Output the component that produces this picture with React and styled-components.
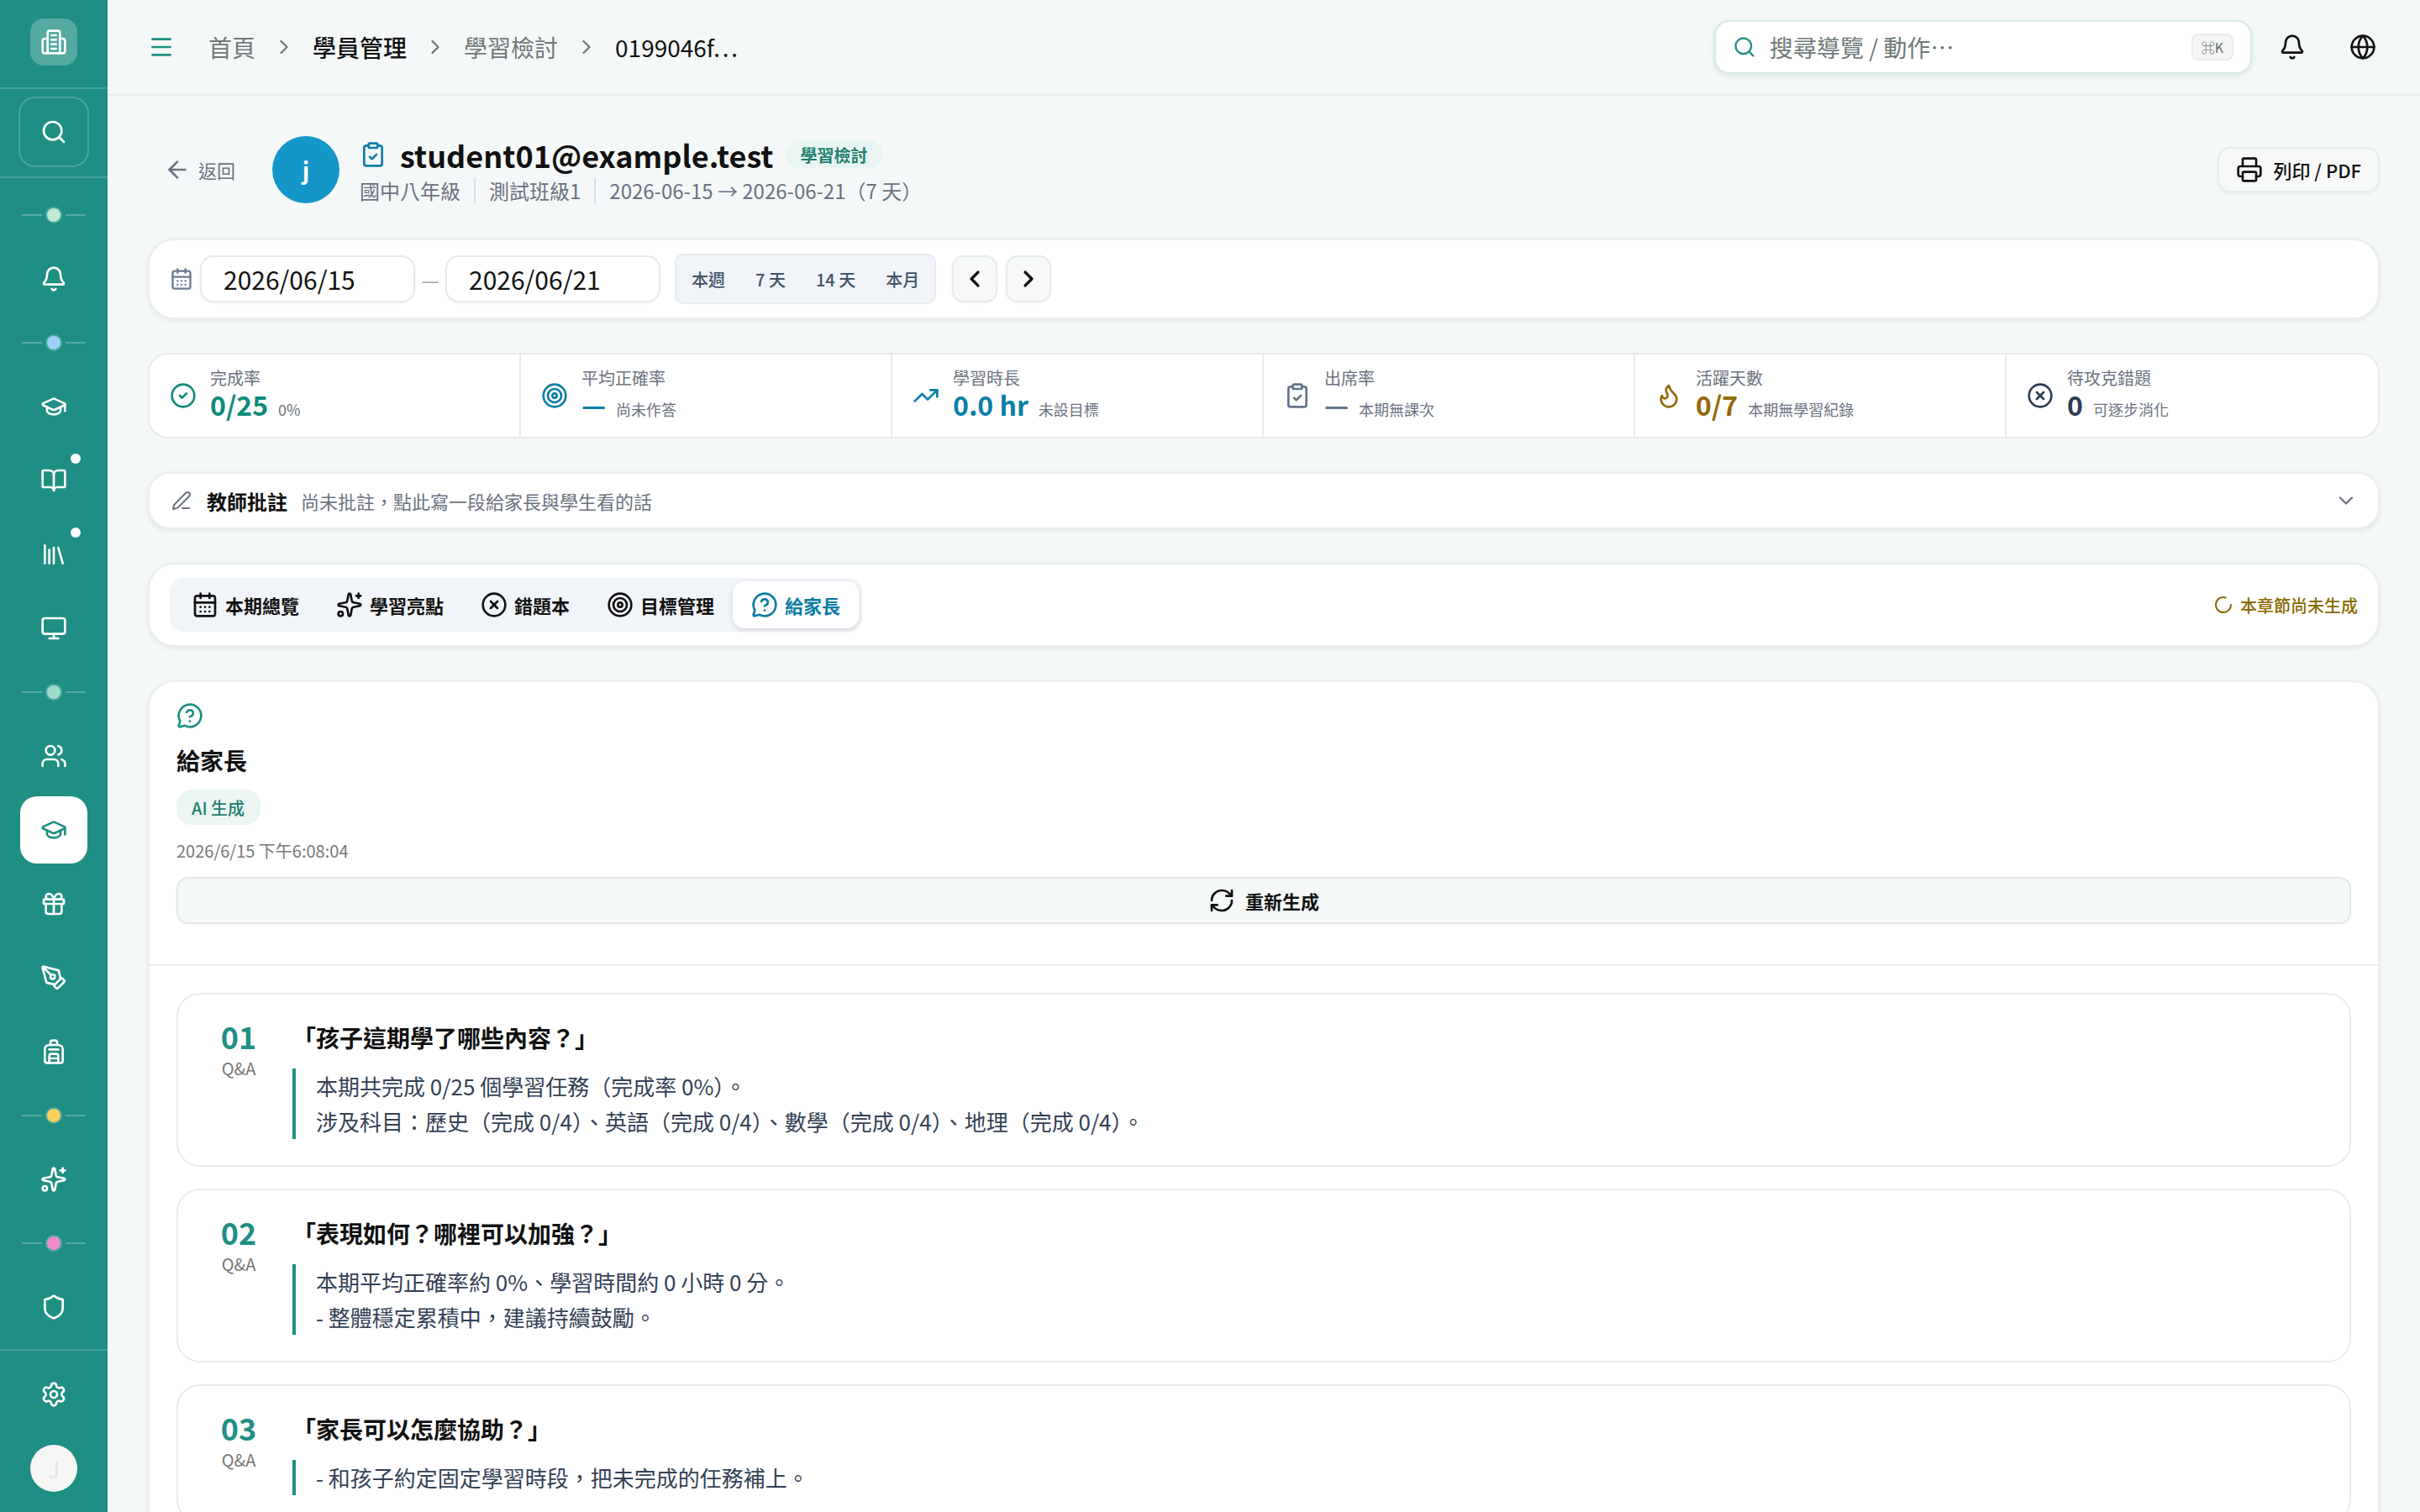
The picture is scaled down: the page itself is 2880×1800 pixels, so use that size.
import React from 'react'
import styled, { createGlobalStyle } from 'styled-components'
import {
  ArrowLeft,
  Backpack,
  Bell,
  BookOpen,
  CalendarDays,
  ChevronDown,
  ChevronLeft,
  ChevronRight,
  CircleCheck,
  CircleX,
  ClipboardCheck,
  Flame,
  Gift,
  Globe,
  GraduationCap,
  Library,
  LoaderCircle,
  Menu,
  MessageCircleQuestion,
  Monitor,
  PenLine,
  PenTool,
  Printer,
  RefreshCw,
  Search,
  Settings,
  Shield,
  Sparkles,
  Target,
  TrendingUp,
  Users,
} from 'lucide-react'

const GlobalStyle = createGlobalStyle`
  html, body {
    margin: 0;
    width: 2880px;
    height: 1800px;
    overflow: hidden;
    background: #f5f8f8;
    font-family: "Noto Sans CJK TC", "Noto Sans", sans-serif;
    color: #111;
  }
  * { box-sizing: border-box; }
`

const Shell = styled.div`
  display: flex;
  width: 2880px;
  height: 1800px;
  overflow: hidden;
`

/* sidebar */
const Sidebar = styled.aside`
  flex: 0 0 128px;
  display: flex;
  flex-direction: column;
  background: #1f8f83;
  color: #fff;
`

const LogoArea = styled.div`
  height: 106px;
  display: flex;
  align-items: center;
  justify-content: center;
  padding-bottom: 4px;
  border-bottom: 2px solid rgba(255, 255, 255, 0.16);
`

const LogoTile = styled.div`
  width: 56px;
  height: 56px;
  border-radius: 16px;
  background: rgba(255, 255, 255, 0.24);
  display: flex;
  align-items: center;
  justify-content: center;
`

const SearchArea = styled.div`
  height: 106px;
  display: flex;
  align-items: center;
  justify-content: center;
  padding-bottom: 2px;
  border-bottom: 2px solid rgba(255, 255, 255, 0.16);
`

const SearchTile = styled.div`
  width: 84px;
  height: 84px;
  border-radius: 20px;
  border: 2px solid rgba(255, 255, 255, 0.2);
  display: flex;
  align-items: center;
  justify-content: center;
`

const Nav = styled.nav`
  flex: 1;
  display: flex;
  flex-direction: column;
  align-items: center;
  gap: 8px;
  padding-top: 16px;
`

const NavItem = styled.div`
  position: relative;
  width: 80px;
  height: 80px;
  flex: none;
  border-radius: 20px;
  display: flex;
  align-items: center;
  justify-content: center;
  background: ${p => (p.$active ? '#fff' : 'transparent')};
  color: ${p => (p.$active ? '#1f8f83' : '#fff')};
`

const NavBadge = styled.span`
  position: absolute;
  top: 8px;
  right: 8px;
  width: 12px;
  height: 12px;
  border-radius: 50%;
  background: #fff;
`

const NavSep = styled.div`
  width: 80px;
  height: 56px;
  flex: none;
  display: flex;
  align-items: center;
  justify-content: center;
  gap: 6px;
  &::before,
  &::after {
    content: '';
    width: 24px;
    height: 2px;
    background: rgba(255, 255, 255, 0.25);
  }
`

const NavDot = styled.span`
  width: 16px;
  height: 16px;
  border-radius: 50%;
  background: ${p => p.$color};
  box-shadow: 0 0 0 2px rgba(255, 255, 255, 0.22);
`

const SideFooter = styled.div`
  display: flex;
  flex-direction: column;
  align-items: center;
  gap: 8px;
  padding: 12px 0;
  border-top: 2px solid rgba(255, 255, 255, 0.16);
`

const SideAvatar = styled.div`
  width: 56px;
  height: 56px;
  border-radius: 50%;
  background: #f6f6f6;
  color: #e4e4e4;
  font-size: 26px;
  display: flex;
  align-items: center;
  justify-content: center;
`

/* top bar */
const Column = styled.div`
  flex: 1;
  min-width: 0;
  display: flex;
  flex-direction: column;
`

const TopBar = styled.header`
  flex: 0 0 114px;
  display: flex;
  align-items: center;
  padding: 0 52px 0 48px;
  border-bottom: 2px solid #e8eded;
`

const MenuButton = styled.div`
  display: flex;
  color: #1f8f83;
  margin-right: 40px;
`

const Crumbs = styled.div`
  flex: 1;
  display: flex;
  align-items: center;
  font-size: 28px;
  line-height: 40px;
`

const Crumb = styled.span`
  color: ${p => (p.$dark ? '#111' : '#6e7a78')};
  font-weight: ${p => p.$weight || 400};
`

const CrumbSep = styled.span`
  display: flex;
  color: #6e7a78;
  margin: 0 20px;
`

const SearchBox = styled.div`
  width: 640px;
  height: 64px;
  display: flex;
  align-items: center;
  padding: 0 20px;
  background: #fff;
  border: 2px solid #d6ebe6;
  border-radius: 18px;
  box-shadow: 0 2px 6px rgba(20, 60, 55, 0.1);
  color: #6e7a78;
  font-size: 28px;
`

const SearchText = styled.span`
  flex: 1;
  margin-left: 16px;
`

const Kbd = styled.span`
  width: 50px;
  height: 32px;
  display: flex;
  align-items: center;
  justify-content: center;
  background: #f5f6f4;
  border: 2px solid #e8ecea;
  border-radius: 8px;
  font-size: 16px;
  color: #5f6b69;
`

const TopIcon = styled.div`
  display: flex;
  color: #111;
  margin-left: ${p => p.$gap}px;
`

/* page */
const Page = styled.main`
  flex: 1;
  display: flex;
  flex-direction: column;
  gap: 40px;
  padding: 46px 48px 0;
  overflow: hidden;
`

const Header = styled.div`
  flex: none;
  height: 84px;
  display: flex;
  align-items: center;
`

const BackLink = styled.div`
  display: flex;
  align-items: center;
  gap: 9px;
  margin-left: 19px;
  width: 129px;
  font-size: 22px;
  color: #6b7280;
`

const Avatar = styled.div`
  width: 80px;
  height: 80px;
  flex: none;
  border-radius: 50%;
  background: #1596c8;
  color: #fff;
  font-size: 28px;
  font-weight: 600;
  display: flex;
  align-items: center;
  justify-content: center;
`

const HeaderText = styled.div`
  flex: 1;
  margin-left: 24px;
`

const TitleRow = styled.div`
  display: flex;
  align-items: center;
  height: 48px;
  margin-bottom: 2px;
  color: #0e7fa8;
`

const Title = styled.h1`
  margin: 0 14px 0 16px;
  font-size: 36px;
  line-height: 48px;
  font-weight: 700;
  color: #111;
`

const TitleBadge = styled.span`
  height: 34px;
  padding: 0 18px;
  border-radius: 17px;
  background: #e9f5f2;
  color: #1e7f70;
  font-size: 20px;
  font-weight: 600;
  display: flex;
  align-items: center;
`

const MetaRow = styled.div`
  display: flex;
  align-items: center;
  height: 34px;
  font-size: 24px;
  color: #6b7280;
`

const MetaItem = styled.span`
  padding: 0 16px;
  border-left: 2px solid #d8dee6;
  line-height: 32px;
  &:first-child {
    padding-left: 0;
    border-left: 0;
  }
`

const PrintButton = styled.div`
  height: 54px;
  padding: 0 20px;
  display: flex;
  align-items: center;
  gap: 12px;
  background: #f7f9f9;
  border: 2px solid #e6ecec;
  border-radius: 16px;
  box-shadow: 0 2px 4px rgba(0, 0, 0, 0.05);
  font-size: 22px;
  font-weight: 500;
`

const Card = styled.section`
  flex: none;
  background: #fff;
  border: 2px solid #eaeeef;
  border-radius: ${p => p.$radius || 32}px;
  box-shadow: 0 2px 6px rgba(0, 0, 0, 0.08);
`

const DateBar = styled(Card)`
  height: 96px;
  display: flex;
  align-items: center;
  padding: 0 24px;
`

const CalendarIcon = styled.div`
  display: flex;
  color: #6b7a90;
  margin-right: 8px;
`

const DateInput = styled.div`
  width: 256px;
  height: 56px;
  display: flex;
  align-items: center;
  padding-left: 26px;
  background: #fff;
  border: 2px solid #e6e9ed;
  border-radius: 16px;
  box-shadow: 0 1px 3px rgba(0, 0, 0, 0.06);
  font-size: 30px;
`

const DateDash = styled.span`
  width: 36px;
  text-align: center;
  color: #9aa7b8;
  font-size: 24px;
`

const Segment = styled.div`
  height: 60px;
  margin-left: 17px;
  display: flex;
  align-items: center;
  background: #f0f4f8;
  border: 2px solid #e6ebf1;
  border-radius: 10px;
`

const SegmentItem = styled.span`
  padding: 0 18px;
  font-size: 20px;
  font-weight: 500;
  color: #42526a;
`

const PagerButton = styled.div`
  width: 54px;
  height: 56px;
  margin-left: ${p => p.$gap}px;
  display: flex;
  align-items: center;
  justify-content: center;
  background: #f7f9f9;
  border: 2px solid #e6ebeb;
  border-radius: 14px;
  box-shadow: 0 1px 3px rgba(0, 0, 0, 0.06);
`

const StatsGrid = styled.section`
  flex: none;
  height: 102px;
  display: grid;
  grid-template-columns: repeat(6, 1fr);
  background: #fff;
  border: 2px solid #e6eaf0;
  border-radius: 24px;
`

const Stat = styled.div`
  display: flex;
  align-items: center;
  gap: 16px;
  padding: 0 20px 0 24px;
  border-right: 2px solid #e6eaf0;
  color: ${p => p.$color};
  &:last-child {
    border-right: 0;
  }
`

const StatBody = styled.div`
  display: flex;
  flex-direction: column;
  padding-bottom: 6px;
`

const StatLabel = styled.span`
  font-size: 20px;
  line-height: 28px;
  color: #6b7280;
`

const StatLine = styled.div`
  display: flex;
  align-items: baseline;
  gap: 12px;
  height: 38px;
  margin-top: -2px;
`

const StatValue = styled.span`
  font-size: 32px;
  line-height: 38px;
  font-weight: 700;
`

const StatHint = styled.span`
  font-size: 18px;
  color: #6b7280;
`

const NoteBar = styled(Card)`
  height: 68px;
  display: flex;
  align-items: center;
  padding: 0 24px;
  border-radius: 26px;
`

const NoteIcon = styled.div`
  display: flex;
  color: #6b7280;
  margin: 0 18px 0 2px;
`

const NoteTitle = styled.span`
  font-size: 24px;
  font-weight: 700;
  margin-right: 16px;
`

const NoteText = styled.span`
  flex: 1;
  font-size: 22px;
  color: #6b7280;
`

const TabsBar = styled(Card)`
  height: 100px;
  display: flex;
  align-items: center;
  justify-content: space-between;
  padding: 0 24px;
`

const TabList = styled.div`
  height: 64px;
  padding: 4px;
  display: flex;
  background: #f1f4f8;
  border-radius: 16px;
`

const Tab = styled.div`
  display: flex;
  align-items: center;
  gap: 8px;
  padding: 0 22px;
  border-radius: 14px;
  font-size: 22px;
  font-weight: 600;
  color: ${p => (p.$active ? '#0b7ba3' : '#111')};
  background: ${p => (p.$active ? '#fff' : 'transparent')};
  box-shadow: ${p => (p.$active ? '0 2px 6px rgba(0,0,0,.12)' : 'none')};
`

const TabStatus = styled.div`
  display: flex;
  align-items: center;
  gap: 8px;
  font-size: 20px;
  font-weight: 500;
  color: #8a6a00;
`

const MainCard = styled(Card)`
  flex: 1 0 auto;
  border-bottom: 0;
  border-radius: 32px 32px 0 0;
`

const CardHead = styled.div`
  padding: 22px 32px 48px;
  border-bottom: 2px solid #e8ecee;
  color: #1f8f83;
`

const HeadIcon = styled.div`
  display: flex;
  height: 36px;
  align-items: center;
`

const HeadTitle = styled.h2`
  margin: 14px 0 0;
  font-size: 28px;
  line-height: 42px;
  font-weight: 700;
  color: #111;
`

const AiBadge = styled.span`
  display: inline-flex;
  align-items: center;
  height: 42px;
  margin-top: 14px;
  padding: 0 19px 0 18px;
  border-radius: 18px;
  background: #ebf5f2;
  color: #1e7f70;
  font-size: 20px;
  font-weight: 500;
`

const Stamp = styled.div`
  margin-top: 16px;
  font-size: 20px;
  line-height: 30px;
  color: #777;
`

const RegenButton = styled.div`
  height: 56px;
  margin-top: 16px;
  display: flex;
  align-items: center;
  justify-content: center;
  gap: 12px;
  background: #f4f8f7;
  border: 2px solid #e3e9e7;
  border-radius: 14px;
  box-shadow: 0 1px 3px rgba(0, 0, 0, 0.06);
  color: #111;
  font-size: 22px;
  font-weight: 600;
`

const QaList = styled.div`
  display: flex;
  flex-direction: column;
  gap: 26px;
  padding: 32px;
`

const QaCard = styled.article`
  flex: none;
  display: flex;
  gap: 24px;
  padding: 30px 32px 31px;
  border: 2px solid #e8ecee;
  border-radius: 28px;
`

const QaIndex = styled.div`
  flex: 0 0 80px;
  display: flex;
  flex-direction: column;
  align-items: center;
`

const QaNumber = styled.span`
  font-size: 36px;
  line-height: 38px;
  margin-bottom: 6px;
  font-weight: 700;
  color: #1f8f83;
`

const QaTag = styled.span`
  font-size: 20px;
  line-height: 28px;
  color: #777;
`

const QaBody = styled.div`
  flex: 1;
  min-width: 0;
`

const QaTitle = styled.h3`
  margin: 0 0 16px;
  font-size: 28px;
  line-height: 42px;
  font-weight: 700;
  color: #111;
`

const QaAnswer = styled.div`
  padding-left: 24px;
  border-left: 4px solid #1f8f83;
  font-size: 26px;
  line-height: 42px;
  color: #334155;
`

const LogoIcon = () => (
  <svg width="32" height="32" viewBox="0 0 24 24" fill="none" stroke="#fff" strokeWidth="2" strokeLinecap="round" strokeLinejoin="round">
    <path d="M6.5 22V4a2 2 0 0 1 2-2h7a2 2 0 0 1 2 2v18" />
    <path d="M6.5 9H4a2 2 0 0 0-2 2v9a2 2 0 0 0 2 2h16a2 2 0 0 0 2-2v-9a2 2 0 0 0-2-2h-2.5" />
    <path d="M10 6h4M10 10h4M10 14h4M10 18h4" />
  </svg>
)

const topNav = [
  { dot: '#bfe8d6' },
  { icon: Bell },
  { dot: '#9fd0f5' },
  { icon: GraduationCap },
  { icon: BookOpen, badge: true },
  { icon: Library, badge: true },
  { icon: Monitor },
  { dot: '#9fdccf' },
  { icon: Users },
  { icon: GraduationCap, active: true },
  { icon: Gift },
  { icon: PenTool },
  { icon: Backpack },
  { dot: '#f6cf5f' },
  { icon: Sparkles },
  { dot: '#ee8cc4' },
  { icon: Shield },
]

const stats = [
  { icon: CircleCheck, color: '#0f8a7c', label: '完成率', value: '0/25', hint: '0%' },
  { icon: Target, color: '#0a7ea8', label: '平均正確率', value: '—', hint: '尚未作答' },
  { icon: TrendingUp, color: '#0a7ea8', label: '學習時長', value: '0.0 hr', hint: '未設目標' },
  { icon: ClipboardCheck, color: '#64748b', label: '出席率', value: '—', hint: '本期無課次' },
  { icon: Flame, color: '#93690a', label: '活躍天數', value: '0/7', hint: '本期無學習紀錄' },
  { icon: CircleX, color: '#2a3d58', label: '待攻克錯題', value: '0', hint: '可逐步消化' },
]

const tabs = [
  { icon: CalendarDays, label: '本期總覽' },
  { icon: Sparkles, label: '學習亮點' },
  { icon: CircleX, label: '錯題本' },
  { icon: Target, label: '目標管理' },
  { icon: MessageCircleQuestion, label: '給家長', active: true },
]

const questions = [
  {
    title: '「孩子這期學了哪些內容？」',
    lines: ['本期共完成 0/25 個學習任務（完成率 0%）。', '涉及科目：歷史（完成 0/4）、英語（完成 0/4）、數學（完成 0/4）、地理（完成 0/4）。'],
  },
  {
    title: '「表現如何？哪裡可以加強？」',
    lines: ['本期平均正確率約 0%、學習時間約 0 小時 0 分。', '- 整體穩定累積中，建議持續鼓勵。'],
  },
  {
    title: '「家長可以怎麼協助？」',
    lines: ['- 和孩子約定固定學習時段，把未完成的任務補上。'],
  },
]

const App = () => (
  <Shell>
    <GlobalStyle />
    <Sidebar>
      <LogoArea>
        <LogoTile>
          <LogoIcon />
        </LogoTile>
      </LogoArea>
      <SearchArea>
        <SearchTile>
          <Search size={32} strokeWidth={2} />
        </SearchTile>
      </SearchArea>
      <Nav>
        {topNav.map((item, i) =>
          item.dot ? (
            <NavSep key={i}>
              <NavDot $color={item.dot} />
            </NavSep>
          ) : (
            <NavItem key={i} $active={item.active}>
              <item.icon size={32} strokeWidth={2} />
              {item.badge && <NavBadge />}
            </NavItem>
          )
        )}
      </Nav>
      <SideFooter>
        <NavItem>
          <Settings size={32} strokeWidth={2} />
        </NavItem>
        <NavItem>
          <SideAvatar>J</SideAvatar>
        </NavItem>
      </SideFooter>
    </Sidebar>
    <Column>
      <TopBar>
        <MenuButton>
          <Menu size={32} strokeWidth={2} />
        </MenuButton>
        <Crumbs>
          <Crumb>首頁</Crumb>
          <CrumbSep><ChevronRight size={28} strokeWidth={2} /></CrumbSep>
          <Crumb $dark $weight={500}>學員管理</Crumb>
          <CrumbSep><ChevronRight size={28} strokeWidth={2} /></CrumbSep>
          <Crumb>學習檢討</Crumb>
          <CrumbSep><ChevronRight size={28} strokeWidth={2} /></CrumbSep>
          <Crumb $dark>0199046f…</Crumb>
        </Crumbs>
        <SearchBox>
          <Search size={28} color="#1f8f83" strokeWidth={2} />
          <SearchText>搜尋導覽 / 動作…</SearchText>
          <Kbd>⌘K</Kbd>
        </SearchBox>
        <TopIcon $gap={32}><Bell size={32} strokeWidth={2} /></TopIcon>
        <TopIcon $gap={52}><Globe size={32} strokeWidth={2} /></TopIcon>
      </TopBar>
      <Page>
        <Header>
          <BackLink>
            <ArrowLeft size={32} strokeWidth={2} />
            返回
          </BackLink>
          <Avatar>j</Avatar>
          <HeaderText>
            <TitleRow>
              <ClipboardCheck size={32} strokeWidth={2} />
              <Title>student01@example.test</Title>
              <TitleBadge>學習檢討</TitleBadge>
            </TitleRow>
            <MetaRow>
              <MetaItem>國中八年級</MetaItem>
              <MetaItem>測試班級1</MetaItem>
              <MetaItem>2026-06-15 → 2026-06-21（7 天）</MetaItem>
            </MetaRow>
          </HeaderText>
          <PrintButton>
            <Printer size={32} strokeWidth={2} />
            列印 / PDF
          </PrintButton>
        </Header>

        <DateBar>
          <CalendarIcon><CalendarDays size={28} strokeWidth={2} /></CalendarIcon>
          <DateInput>2026/06/15</DateInput>
          <DateDash>—</DateDash>
          <DateInput>2026/06/21</DateInput>
          <Segment>
            <SegmentItem>本週</SegmentItem>
            <SegmentItem>7 天</SegmentItem>
            <SegmentItem>14 天</SegmentItem>
            <SegmentItem>本月</SegmentItem>
          </Segment>
          <PagerButton $gap={19}><ChevronLeft size={32} strokeWidth={2.4} /></PagerButton>
          <PagerButton $gap={10}><ChevronRight size={32} strokeWidth={2.4} /></PagerButton>
        </DateBar>

        <StatsGrid>
          {stats.map(s => (
            <Stat key={s.label} $color={s.color}>
              <s.icon size={32} strokeWidth={2} />
              <StatBody>
                <StatLabel>{s.label}</StatLabel>
                <StatLine>
                  <StatValue>{s.value}</StatValue>
                  <StatHint>{s.hint}</StatHint>
                </StatLine>
              </StatBody>
            </Stat>
          ))}
        </StatsGrid>

        <NoteBar>
          <NoteIcon><PenLine size={24} strokeWidth={2} /></NoteIcon>
          <NoteTitle>教師批註</NoteTitle>
          <NoteText>尚未批註，點此寫一段給家長與學生看的話</NoteText>
          <ChevronDown size={28} color="#6b7280" strokeWidth={2} />
        </NoteBar>

        <TabsBar>
          <TabList>
            {tabs.map(t => (
              <Tab key={t.label} $active={t.active}>
                <t.icon size={32} strokeWidth={2} />
                {t.label}
              </Tab>
            ))}
          </TabList>
          <TabStatus>
            <LoaderCircle size={24} strokeWidth={2} />
            本章節尚未生成
          </TabStatus>
        </TabsBar>

        <MainCard>
          <CardHead>
            <HeadIcon><MessageCircleQuestion size={32} strokeWidth={2} /></HeadIcon>
            <HeadTitle>給家長</HeadTitle>
            <AiBadge>AI 生成</AiBadge>
            <Stamp>2026/6/15 下午6:08:04</Stamp>
            <RegenButton>
              <RefreshCw size={32} strokeWidth={2} />
              重新生成
            </RegenButton>
          </CardHead>
          <QaList>
            {questions.map((q, i) => (
              <QaCard key={q.title}>
                <QaIndex>
                  <QaNumber>{`0${i + 1}`}</QaNumber>
                  <QaTag>Q&amp;A</QaTag>
                </QaIndex>
                <QaBody>
                  <QaTitle>{q.title}</QaTitle>
                  <QaAnswer>
                    {q.lines.map(line => (
                      <div key={line}>{line}</div>
                    ))}
                  </QaAnswer>
                </QaBody>
              </QaCard>
            ))}
          </QaList>
        </MainCard>
      </Page>
    </Column>
  </Shell>
)

export default App
